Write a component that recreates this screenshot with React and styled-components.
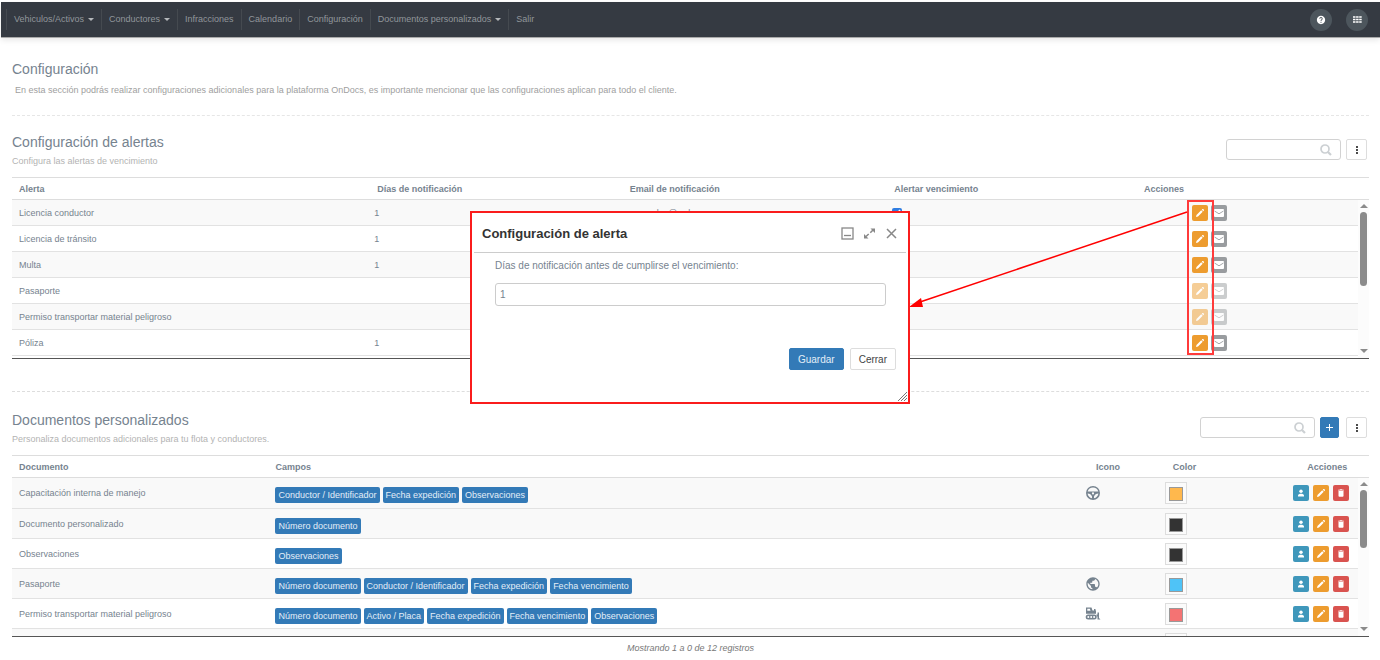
import React, {useState} from "react";
import styled, {createGlobalStyle, css} from "styled-components";
import {MdDelete, MdHelp, MdMoreVert, MdPublic} from "react-icons/md";

const GlobalStyle = createGlobalStyle`
  * {
    box-sizing: border-box;
  }
  body {
    margin: 0;
    background: #fff;
    color: #76838f;
    font-family: "Liberation Sans", Arial, sans-serif;
    font-size: 9px;
    line-height: 12px;
  }
  button, input {
    font-family: inherit;
  }
`;

const menu = [
  {label: "Vehiculos/Activos", dropdown: true},
  {label: "Conductores", dropdown: true},
  {label: "Infracciones"},
  {label: "Calendario"},
  {label: "Configuración"},
  {label: "Documentos personalizados", dropdown: true},
  {label: "Salir"},
];

const alerts = [
  {name: "Licencia conductor", days: "1", email: "cgonzalez@redgps.com", notify: true},
  {name: "Licencia de tránsito", days: "1"},
  {name: "Multa", days: "1"},
  {name: "Pasaporte", disabled: true},
  {name: "Permiso transportar material peligroso", disabled: true},
  {name: "Póliza", days: "1"},
];

const documents = [
  {
    name: "Capacitación interna de manejo",
    fields: ["Conductor / Identificador", "Fecha expedición", "Observaciones"],
    icon: "wheel",
    color: "#ffb84d",
  },
  {name: "Documento personalizado", fields: ["Número documento"], color: "#333333"},
  {name: "Observaciones", fields: ["Observaciones"], color: "#333333"},
  {
    name: "Pasaporte",
    fields: ["Número documento", "Conductor / Identificador", "Fecha expedición", "Fecha vencimiento"],
    icon: "globe",
    color: "#4fc3f7",
  },
  {
    name: "Permiso transportar material peligroso",
    fields: ["Número documento", "Activo / Placa", "Fecha expedición", "Fecha vencimiento", "Observaciones"],
    icon: "dozer",
    color: "#f47373",
  },
];

let Bulldozer = () => (
  <svg width="16" height="16" viewBox="0 0 16 16" fill="currentColor" aria-hidden="true">
    <path fillRule="evenodd" d="M1 1.500h5.500l1 3H9V3h1.500v1.500H11v3.300H1zM2.300 2.700v2h3.200l-.6-2z" />
    <path
      fillRule="evenodd"
      d="M3.200 8.500h6a2.500 2.500 0 0 1 0 5h-6a2.500 2.500 0 0 1 0-5zM3.300 10a1 1 0 1 0 0 2 1 1 0 0 0 0-2zM6.200 10a1 1 0 1 0 0 2 1 1 0 0 0 0-2zM9.100 10a1 1 0 1 0 0 2 1 1 0 0 0 0-2z"
    />
    <path d="M11.500 8.500h1V6.500H14v5.500l1.500 1.500H12.500v-3h-1z" />
  </svg>
);

let SteeringWheel = () => (
  <svg width="16" height="16" viewBox="0 0 16 16" aria-hidden="true">
    <path
      fill="currentColor"
      fillRule="evenodd"
      d="M8 1a7 7 0 1 1 0 14A7 7 0 0 1 8 1zM8 2.600C5.400 2.600 3.300 4.200 2.700 6.500h10.600C12.700 4.200 10.600 2.600 8 2.600zM2.600 8.500c.3 2.400 2 4.300 4.400 4.800V11.500c-.8-1.800-2.200-2.900-4.400-3zM13.400 8.500c-2.200.1-3.600 1.200-4.400 3v1.800c2.400-.5 4.100-2.400 4.400-4.800zM8 7.300a1.100 1.100 0 1 0 0 2.200 1.100 1.100 0 0 0 0-2.200z"
    />
  </svg>
);

let Pencil = () => (
  <svg width="10" height="10" viewBox="0 0 10 10" fill="#fff" aria-hidden="true">
    <path d="M1 9l.5-2L6.200 2.300l1.500 1.500L3 8.500zM6.800 1.700l.6-.6a.6.6 0 0 1 .8 0l.7.7a.6.6 0 0 1 0 .8l-.6.6z" />
  </svg>
);

let Mail = () => (
  <svg width="10" height="8" viewBox="0 0 10 8" aria-hidden="true">
    <rect width="10" height="8" rx="1" fill="#fff" />
    <path d="M.5 2L5 4.800 9.500 2" fill="none" stroke="#a5a8ab" />
  </svg>
);

let Person = () => (
  <svg width="8" height="8" viewBox="0 0 8 8" fill="#fff" aria-hidden="true">
    <circle cx="4" cy="2.200" r="1.700" />
    <path d="M1 7.500V6.300C1 5.300 2.500 4.700 4 4.700s3 .6 3 1.600v1.200z" />
  </svg>
);

let AppsGrid = () => (
  <svg width="9" height="7" viewBox="0 0 9 7" stroke="#fff" strokeWidth="1.700" strokeDasharray="2.500 0.600" aria-hidden="true">
    <path d="M0 1h9M0 3.500h9M0 6h9" />
  </svg>
);

const docIcons = {
  wheel: <SteeringWheel />,
  globe: <MdPublic size={16} />,
  dozer: <Bulldozer />,
};

let Scrollbar = ({thumb}) => (
  <Bar aria-hidden="true">
    <Arrow />
    <Thumb $height={thumb} />
    <Arrow $down />
  </Bar>
);

let Search = ({label}) => (
  <SearchBox>
    <input type="text" aria-label={label} />
    <svg width="12" height="12" viewBox="0 0 12 12" fill="none" stroke="#ccd0d3" aria-hidden="true">
      <circle cx="5" cy="5" r="4" strokeWidth="1.700" />
      <path d="M8 8l3 3" strokeWidth="2.200" />
    </svg>
  </SearchBox>
);

let AlertDialog = () => {
  let [days, setDays] = useState("1");
  return (
    <Dialog role="dialog" aria-labelledby="dialog-title">
      <DialogHeader>
        <h3 id="dialog-title">Configuración de alerta</h3>
        <WindowButton aria-label="Minimizar">
          <svg width="13" height="13" viewBox="0 0 13 13" fill="none" stroke="currentColor">
            <rect x="1" y="1" width="11" height="11" strokeWidth="1.300" />
            <path d="M3 8.500h7" strokeWidth="1.300" />
          </svg>
        </WindowButton>
        <WindowButton aria-label="Maximizar">
          <svg width="13" height="13" viewBox="0 0 13 13" fill="currentColor">
            <path d="M7.500 1.500H12V6zM1 7v4.500h4.500z" />
            <path d="M3 9.500L5.700 7M7.300 5.800L10 3" stroke="currentColor" strokeWidth="1.500" />
          </svg>
        </WindowButton>
        <WindowButton aria-label="Cerrar ventana">
          <svg width="13" height="13" viewBox="0 0 13 13" fill="none" stroke="currentColor">
            <path d="M2 2l9 9M11 2l-9 9" strokeWidth="1.500" />
          </svg>
        </WindowButton>
      </DialogHeader>
      <DialogBody>
        <label htmlFor="days">Días de notificación antes de cumplirse el vencimiento:</label>
        <input id="days" type="text" value={days} onChange={(e) => setDays(e.target.value)} />
      </DialogBody>
      <DialogFooter>
        <DialogButton $primary>Guardar</DialogButton>
        <DialogButton>Cerrar</DialogButton>
      </DialogFooter>
      <Grip width="9" height="9" viewBox="0 0 9 9" stroke="#777" aria-hidden="true">
        <path d="M0 9L9 0M3 9L9 3M6 9L9 6" />
      </Grip>
    </Dialog>
  );
};

const App = () => {
  return (
    <Page>
      <GlobalStyle />
      <Navbar>
        <Menu>
          {menu.map((item) => (
            <li key={item.label}>
              <a href="#">
                {item.label}
                {item.dropdown && <Caret />}
              </a>
            </li>
          ))}
        </Menu>
        <RoundButton aria-label="Ayuda">
          <MdHelp size={10} />
        </RoundButton>
        <RoundButton aria-label="Aplicaciones">
          <AppsGrid />
        </RoundButton>
      </Navbar>
      <Main>
        <Intro>
          <h1>Configuración</h1>
          <p>
            En esta sección podrás realizar configuraciones adicionales para la plataforma OnDocs, es importante
            mencionar que las configuraciones aplican para todo el cliente.
          </p>
        </Intro>

        <Section>
          <SectionHeader>
            <div>
              <h2>Configuración de alertas</h2>
              <p>Configura las alertas de vencimiento</p>
            </div>
            <Tools>
              <Search label="Buscar alertas" />
              <ToolButton aria-label="Más opciones">
                <MdMoreVert size={12} />
              </ToolButton>
            </Tools>
          </SectionHeader>
          <TableWrap>
            <Table>
              <colgroup>
                <Col $width="26.4%" />
                <Col $width="18.6%" />
                <Col $width="19.5%" />
                <Col $width="18.4%" />
                <Col />
              </colgroup>
              <thead>
                <tr>
                  <Th>Alerta</Th>
                  <Th>Días de notificación</Th>
                  <Th>Email de notificación</Th>
                  <Th>Alertar vencimiento</Th>
                  <Th>Acciones</Th>
                </tr>
              </thead>
              <tbody>
                {alerts.map((alert, i) => (
                  <Row key={alert.name} $shaded={i % 2 === 0}>
                    <Td>{alert.name}</Td>
                    <Td $indent={4}>{alert.days}</Td>
                    <Td $indent={5}>{alert.email}</Td>
                    <Td $indent={5}>
                      {alert.notify && <Check type="checkbox" defaultChecked aria-label="Alertar vencimiento" />}
                    </Td>
                    <Td $indent={55}>
                      <Actions $tight>
                        <IconButton $color="#ed9c2f" disabled={alert.disabled} aria-label="Editar">
                          <Pencil />
                        </IconButton>
                        <IconButton $color="#999c9f" disabled={alert.disabled} aria-label="Enviar correo">
                          <Mail />
                        </IconButton>
                      </Actions>
                    </Td>
                  </Row>
                ))}
              </tbody>
            </Table>
            <Scrollbar thumb={74} />
          </TableWrap>
        </Section>

        <Section>
          <SectionHeader>
            <div>
              <h2>Documentos personalizados</h2>
              <p>Personaliza documentos adicionales para tu flota y conductores.</p>
            </div>
            <Tools>
              <Search label="Buscar documentos" />
              <ToolButton $primary aria-label="Agregar">
                <svg width="9" height="9" viewBox="0 0 9 9" stroke="currentColor" aria-hidden="true">
                  <path d="M4.500 1v7M1 4.500h7" />
                </svg>
              </ToolButton>
              <ToolButton aria-label="Más opciones">
                <MdMoreVert size={12} />
              </ToolButton>
            </Tools>
          </SectionHeader>
          <TableWrap>
            <Table>
              <colgroup>
                <Col $width="18.9%" />
                <Col $width="59.8%" />
                <Col $width="5.8%" />
                <Col $width="9.4%" />
                <Col />
              </colgroup>
              <thead>
                <tr>
                  <Th>Documento</Th>
                  <Th>Campos</Th>
                  <Th $indent={16}>Icono</Th>
                  <Th $indent={14}>Color</Th>
                  <Th $indent={21}>Acciones</Th>
                </tr>
              </thead>
              <tbody>
                {documents.map((doc, i) => (
                  <Row key={doc.name} $tall $first={i === 0} $shaded={i === 0 || i % 2 === 1}>
                    <Td>{doc.name}</Td>
                    <Td>
                      <Tags>
                        {doc.fields.map((field) => (
                          <Tag key={field}>{field}</Tag>
                        ))}
                      </Tags>
                    </Td>
                    <Td $indent={5}>{doc.icon && docIcons[doc.icon]}</Td>
                    <Td $indent={6}>
                      <Swatch $color={doc.color} />
                    </Td>
                    <Td>
                      <Actions>
                        <IconButton $color="#3f97bb" aria-label="Asignar">
                          <Person />
                        </IconButton>
                        <IconButton $color="#ed9c2f" aria-label="Editar">
                          <Pencil />
                        </IconButton>
                        <IconButton $color="#d9534f" aria-label="Eliminar">
                          <MdDelete size={10} />
                        </IconButton>
                      </Actions>
                    </Td>
                  </Row>
                ))}
                <Row $tall $shaded>
                  <Td colSpan={3} />
                  <Td $indent={6}>
                    <Swatch $color="#333333" />
                  </Td>
                  <Td />
                </Row>
              </tbody>
            </Table>
            <Scrollbar thumb={58} />
          </TableWrap>
          <Count>Mostrando 1 a 0 de 12 registros</Count>
        </Section>
      </Main>

      <Pointer width="310" height="160" viewBox="0 0 310 160" fill="none" aria-hidden="true">
        <rect x="280" y="1" width="25" height="153" stroke="#ff3b3b" strokeWidth="2" />
        <path d="M279 12L12 102" stroke="#f00" strokeWidth="1.500" />
        <path d="M1 107L13 98L15 107z" fill="#f00" />
      </Pointer>
      <AlertDialog />
    </Page>
  );
};

const Page = styled.div`
  position: relative;
  padding: 2px 0 4px;
`;

const Navbar = styled.nav`
  display: flex;
  align-items: center;
  gap: 14px;
  height: 35px;
  margin-left: 1px;
  padding: 0 12px 0 5px;
  background: #353a42;
  box-shadow: 0 1px 0 #aaa, 0 3px 6px rgba(0, 0, 0, 0.1);
`;

const Menu = styled.ul`
  display: flex;
  flex: 1;
  margin: 0;
  padding: 0;
  list-style: none;
  li {
    border-left: 1px solid #454a50;
    padding: 4px 7px;
  }
  a {
    display: flex;
    align-items: center;
    gap: 4px;
    color: #91969b;
    line-height: 13px;
    text-decoration: none;
  }
`;

const Caret = styled.span`
  border: 3px solid transparent;
  border-top-color: #b5b8bb;
  border-bottom: 0;
`;

const RoundButton = styled.button`
  display: grid;
  place-items: center;
  width: 22px;
  height: 22px;
  padding: 0;
  border: 0;
  border-radius: 50%;
  background: #4d565d;
  color: #fff;
`;

const Main = styled.main`
  padding: 0 11px 0 12px;
`;

const Intro = styled.header`
  padding: 24px 0 19px;
  border-bottom: 1px dashed #e6e6e6;
  h1 {
    margin: 0;
    font-size: 14px;
    font-weight: normal;
    line-height: 16px;
  }
  p {
    margin: 7px 3px 0;
    color: #a0a0a0;
    line-height: 12px;
  }
`;

const Section = styled.section`
  padding: 18px 0 32px;
  & + & {
    border-top: 1px dashed #ddd;
    padding: 20px 0 0;
  }
`;

const SectionHeader = styled.div`
  display: flex;
  justify-content: space-between;
  align-items: flex-start;
  h2 {
    margin: 0;
    font-size: 14px;
    font-weight: normal;
    line-height: 16px;
  }
  p {
    margin: 5px 0 10px;
    color: #b3b3b3;
    line-height: 12px;
  }
`;

const Tools = styled.div`
  display: flex;
  gap: 5px;
  padding: 5px 2px 0 0;
`;

const SearchBox = styled.div`
  position: relative;
  input {
    display: block;
    width: 115px;
    height: 21px;
    border: 1px solid #d2d2d2;
    border-radius: 3px;
    font-size: 9px;
  }
  svg {
    position: absolute;
    top: 5px;
    right: 9px;
  }
`;

const ToolButton = styled.button`
  display: grid;
  place-items: center;
  width: 21px;
  height: 21px;
  padding: 0;
  border: 1px solid #ddd;
  border-radius: 2px;
  background: #fff;
  color: #222;
  ${(props) =>
    props.$primary &&
    css`
      width: 19px;
      margin-right: 2px;
      border-color: #337ab7;
      background: #337ab7;
      color: #fff;
    `}
`;

const TableWrap = styled.div`
  position: relative;
  max-height: 182px;
  padding-bottom: 2px;
  overflow: hidden;
  border-bottom: 1px solid #555;
`;

const Table = styled.table`
  width: 100%;
  table-layout: fixed;
  border-collapse: collapse;
  border-top: 1px solid #ddd;
`;

const Col = styled.col`
  width: ${(props) => props.$width || "auto"};
`;

const Th = styled.th`
  height: 22px;
  padding: 0 0 0 ${(props) => props.$indent || 7}px;
  border-bottom: 1px solid #ddd;
  text-align: left;
  white-space: nowrap;
`;

const Td = styled.td`
  padding: 0 0 0 ${(props) => props.$indent || 7}px;
  white-space: nowrap;
  svg {
    display: block;
  }
`;

const rowHeight = ({$tall, $first}) => {
  if (!$tall) return 26;
  return $first ? 31 : 30;
};

const Row = styled.tr`
  height: ${rowHeight}px;
  border-bottom: 1px solid #e2e2e2;
  background: ${(props) => (props.$shaded ? "#f9f9f9" : "#fff")};
`;

const Actions = styled.div`
  display: flex;
  gap: ${(props) => (props.$tight ? 3 : 4)}px;
`;

const IconButton = styled.button`
  display: grid;
  place-items: center;
  width: 16px;
  height: 16px;
  padding: 0;
  border: 0;
  border-radius: 2px;
  background: ${(props) => props.$color};
  color: #fff;
  &:disabled {
    opacity: 0.5;
  }
`;

const Check = styled.input`
  display: block;
  width: 10px;
  height: 10px;
  margin: 0;
  accent-color: #2f7de1;
`;

const Tags = styled.div`
  display: flex;
  gap: 3px;
  padding-top: 4px;
`;

const Tag = styled.span`
  padding: 2px 3px;
  border-radius: 2px;
  background: #337ab7;
  color: #e3eef7;
`;

const Swatch = styled.div`
  width: 22px;
  height: 22px;
  padding: 4px 3px;
  border: 1px solid #ddd;
  background: #fbfbfb;
  &::before {
    content: "";
    display: block;
    height: 12px;
    border: 1px solid #999;
    background: ${(props) => props.$color};
  }
`;

const Bar = styled.div`
  position: absolute;
  top: 23px;
  right: 0;
  bottom: 0;
  display: flex;
  flex-direction: column;
  align-items: center;
  width: 11px;
  padding: 4px 0 5px;
  background: #fcfcfc;
`;

const Arrow = styled.span`
  border: 4px solid transparent;
  border-top-width: 0;
  border-bottom-color: #8b8b8b;
  ${(props) =>
    props.$down &&
    css`
      margin-top: auto;
      border-top: 4px solid #8b8b8b;
      border-bottom: 0;
    `}
`;

const Thumb = styled.span`
  width: 7px;
  height: ${(props) => props.$height}px;
  margin-top: 4px;
  border-radius: 4px;
  background: #8b8b8b;
`;

const Count = styled.p`
  margin: 5px 0 0;
  color: #777;
  font-style: italic;
  text-align: center;
`;

const Pointer = styled.svg`
  position: absolute;
  top: 200px;
  right: 162px;
`;

const Dialog = styled.div`
  position: absolute;
  top: 211px;
  left: 50%;
  width: 440px;
  height: 193px;
  padding: 2px;
  transform: translateX(-50%);
  border: 2px solid #fa1c1c;
  background: #fff;
`;

const DialogHeader = styled.div`
  display: flex;
  align-items: center;
  gap: 9px;
  height: 38px;
  padding: 0 8px;
  border-bottom: 1px solid #ccc;
  h3 {
    flex: 1;
    margin: 0;
    color: #333;
    font-size: 13px;
    line-height: 16px;
  }
`;

const WindowButton = styled.button`
  padding: 0;
  border: 0;
  background: none;
  color: #888;
  svg {
    display: block;
  }
`;

const DialogBody = styled.div`
  padding: 6px 20px 0 21px;
  font-size: 10px;
  label {
    display: block;
    line-height: 14px;
  }
  input {
    width: 100%;
    height: 23px;
    margin-top: 10px;
    padding: 0 4px;
    border: 1px solid #ccc;
    border-radius: 3px;
    color: #76838f;
    font-size: 10px;
  }
`;

const DialogFooter = styled.div`
  display: flex;
  justify-content: flex-end;
  gap: 6px;
  padding: 42px 10px 0 0;
`;

const DialogButton = styled.button`
  height: 22px;
  padding: 0 8px;
  border: 1px solid ${(props) => (props.$primary ? "#337ab7" : "#ddd")};
  border-radius: 2px;
  background: ${(props) => (props.$primary ? "#337ab7" : "#fff")};
  color: ${(props) => (props.$primary ? "#e3eef7" : "#444")};
  font-size: 10px;
`;

const Grip = styled.svg`
  position: absolute;
  right: 1px;
  bottom: 1px;
`;

export default App;
